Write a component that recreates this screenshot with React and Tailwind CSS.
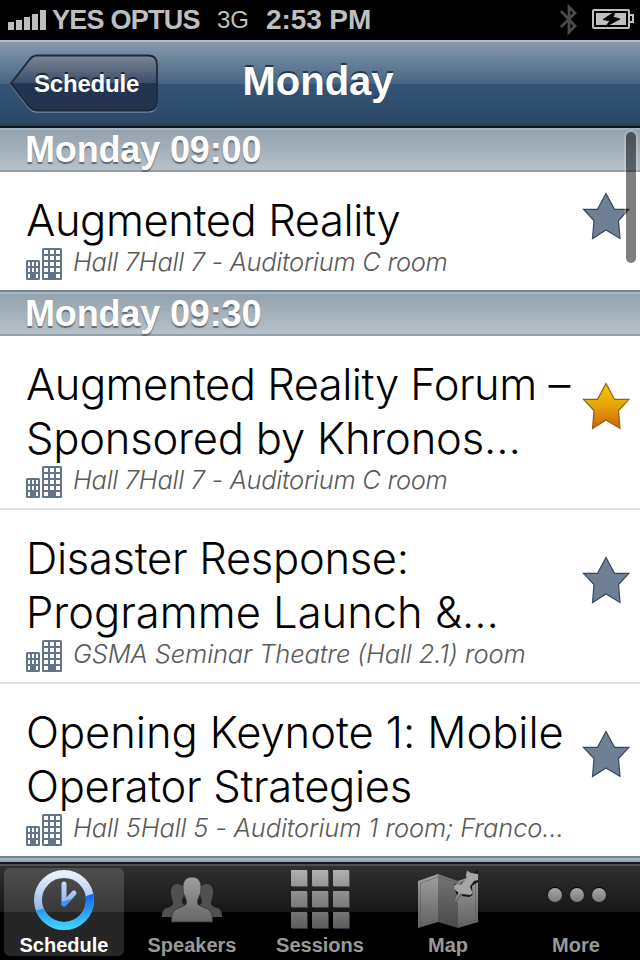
import React from "react";

const sans = "font-['Liberation_Sans',Arial,sans-serif]";

function Battery() {
  return (
    <svg width="43" height="22" viewBox="0 0 43 22" className="block">
      <rect x="1" y="1" width="36" height="18" rx="1" fill="none" stroke="#bfbfbf" strokeWidth="2" />
      <rect x="4" y="4" width="30" height="12" fill="#bfbfbf" />
      <path d="M38 6h3v7h-3" fill="none" stroke="#bfbfbf" strokeWidth="2" />
      <path d="M24 2L11 10.500l7 1.500-5 6 15-8-7-2z" fill="#000" stroke="#000" strokeWidth=".8" />
    </svg>
  );
}

function StatusBar() {
  return (
    <div className={`flex h-10 items-center bg-black text-[#bfbfbf] ${sans}`}>
      <div className="ml-2 flex h-5 w-[38px] items-end gap-[2px]">
        <i className="h-2 w-[6px] bg-current" />
        <i className="h-[10px] w-[6px] bg-current" />
        <i className="h-[13px] w-[6px] bg-current" />
        <i className="h-4 w-[6px] bg-current" />
        <i className="h-5 w-[6px] bg-current" />
      </div>
      <span className="ml-[6px] w-[165px] whitespace-nowrap text-[27px] font-bold tracking-[-0.75px]">YES OPTUS</span>
      <span className="w-[49px] text-[24px]">3G</span>
      <span className="whitespace-nowrap text-[28px] font-bold tracking-[-0.1px]">2:53 PM</span>
      <svg width="18" height="32" viewBox="0 0 18 32" className="mr-[14px] ml-auto">
        <path d="M1 7l14 15-6 6V3l6 6L1 23" fill="none" stroke="#4a4a4a" strokeWidth="2.8" />
      </svg>
      <div className="mr-[5px]"><Battery /></div>
    </div>
  );
}

function NavBar() {
  return (
    <div className={`grid h-[88px] grid-cols-[160px_1fr_164px] items-center border-t-2 border-b-2 border-t-[#b0bfcb] border-b-[#11161c] bg-[linear-gradient(#8798ae_0,#7488a0_15%,#476685_49.5%,#33557a_50%,#2d4864_96%,#263b52_100%)] text-white ${sans}`}>
      <div className="-mt-[1px] grid h-[60px] items-center pl-[10px]">
        <svg width="150" height="60" viewBox="0 0 150 60" className="col-start-1 row-start-1">
          <defs>
            <linearGradient id="back" x1="0" y1="0" x2="0" y2="1">
              <stop offset="0" stopColor="#7b8694" />
              <stop offset=".5" stopColor="#3b4f6b" />
              <stop offset=".51" stopColor="#213552" />
              <stop offset="1" stopColor="#243349" />
            </linearGradient>
          </defs>
          <path d="M27 3h111q9 0 9 9v37q0 9-9 9H27q-5 0-9-5L1 31 18 9q4-6 9-6z" fill="none" stroke="#7189a3" strokeWidth="1.5" />
          <path d="M27 1.500h111q9 0 9 9v37q0 9-9 9H27q-5 0-9-5L1 29.500 18 7.500q4-6 9-6z" fill="url(#back)" stroke="#1d2938" strokeWidth="1.8" />
        </svg>
        <span className="col-start-1 row-start-1 pl-6 text-[24px] leading-none font-bold tracking-[-0.2px] [text-shadow:0_-2px_0_#1b2838]">Schedule</span>
      </div>
      <h1 className="-mt-[7px] text-center text-[40px] leading-none font-bold [text-shadow:0_-2px_0_#26384d]">Monday</h1>
    </div>
  );
}

function SectionHeader({ children, first }) {
  return (
    <div className={first
      ? `h-11 border-t-2 border-b-2 border-t-[#a3b3bf] border-b-[#949fa8] bg-linear-to-b from-[#92a1ac] to-[#b7c1c9] pl-[25px] ${sans}`
      : `h-[46px] border-t-2 border-b-2 border-t-[#758690] border-b-[#949fa8] bg-linear-to-b from-[#92a1ac] to-[#b7c1c9] pl-[25px] shadow-[inset_0_2px_#a7b7c2] ${sans}`}>
      <h2 className={first
        ? "pt-0 text-[36px] leading-10 font-bold text-white tracking-[-0.15px] [text-shadow:0_2px_1px_#626b72]"
        : "pt-[2px] text-[36px] leading-10 font-bold text-white tracking-[-0.15px] [text-shadow:0_2px_1px_#626b72]"}>{children}</h2>
    </div>
  );
}

function Building() {
  const big = [0, 1, 2, 3, 4].flatMap((r) => [0, 1, 2].map((c) => [r, c])).filter(([r, c]) => !(r === 4 && c === 1));
  const small = [0, 1, 2].flatMap((r) => [0, 1, 2].map((c) => [r, c])).filter(([r, c]) => !(r === 2 && c === 1));
  return (
    <svg width="36" height="32" viewBox="0 0 36 32" className="shrink-0">
      <rect x="16" y="0" width="20" height="32" rx="1.500" fill="#62738a" />
      <rect x="0" y="12" width="14" height="20" rx="1.500" fill="#62738a" />
      {big.map(([r, c]) => <rect key={`b${r}${c}`} x={18 + c * 6} y={2 + r * 6} width="4" height="4" fill="#fff" />)}
      {small.map(([r, c]) => <rect key={`s${r}${c}`} x={2 + c * 4} y={14 + r * 6} width="2" height="4" fill="#fff" />)}
    </svg>
  );
}

function Star({ gold }) {
  return (
    <svg width="48" height="49" viewBox="0 0 48 49">
      <defs>
        <linearGradient id="gold" x1="0" y1="0" x2="0" y2="1">
          <stop offset="0" stopColor="#edcd00" />
          <stop offset=".5" stopColor="#e6a307" />
          <stop offset="1" stopColor="#c9640c" />
        </linearGradient>
      </defs>
      <path d="M24 1.500L32.500 17.300H47L36.500 28.500 38 46.500 24 38 10.500 46.500 12 28.500 1.500 17.300H15.500z" fill={gold ? "url(#gold)" : "#6f8094"} stroke={gold ? "#946018" : "#38485a"} strokeWidth="1.2" />
    </svg>
  );
}

function Row({ lines, sub, subClass, gold, last, single }) {
  return (
    <div className={single ? "flex h-[118px] bg-white" : last ? "flex h-[172px] bg-white" : "flex h-[174px] border-b-2 border-[#e0e0e0] bg-white"}>
      <div className="w-[582px] pt-[21px] pl-[26px] font-[Inter,sans-serif] font-light whitespace-nowrap">
        {lines.map(([text, cls]) => (
          <div key={text} className={`text-[43.500px] leading-[54px] text-black ${cls}`}>{text}</div>
        ))}
        <div className="flex h-[27px]">
          <div className="mt-[1px]"><Building /></div>
          <span className={`ml-[11px] pt-[1px] text-[25.500px] leading-[27px] text-[#5a5a5a] italic ${subClass}`}>{sub}</span>
        </div>
      </div>
      <div className={single ? "pt-5" : "pt-[46px]"}><Star gold={gold} /></div>
    </div>
  );
}

function ClockIcon() {
  return (
    <svg width="62" height="62" viewBox="0 0 62 62">
      <defs>
        <linearGradient id="ice" x1="0" y1="0" x2="0" y2="1">
          <stop offset="0" stopColor="#e6effc" />
          <stop offset="1" stopColor="#7099e0" />
        </linearGradient>
        <linearGradient id="aqua" gradientUnits="userSpaceOnUse" x1="0" y1="26" x2="0" y2="60">
          <stop offset="0" stopColor="#1766e8" />
          <stop offset="1" stopColor="#3fd8ff" />
        </linearGradient>
        <linearGradient id="hand" gradientUnits="userSpaceOnUse" x1="0" y1="12" x2="0" y2="36">
          <stop offset="0" stopColor="#c9daf6" />
          <stop offset="1" stopColor="#8fb2ee" />
        </linearGradient>
        <clipPath id="lower"><path d="M0 42Q30 36 62 24v38H0z" /></clipPath>
        <clipPath id="handLower"><path d="M20 33.500Q32 33 46 27v14H20z" /></clipPath>
      </defs>
      <circle cx="31" cy="31" r="26" fill="none" stroke="url(#ice)" strokeWidth="8" />
      <path d="M31 15v20l10-11" fill="none" stroke="url(#hand)" strokeWidth="5" strokeLinecap="round" strokeLinejoin="round" />
      <g clipPath="url(#lower)">
        <circle cx="31" cy="31" r="26" fill="none" stroke="url(#aqua)" strokeWidth="8" />
      </g>
      <path d="M31 15v20l10-11" clipPath="url(#handLower)" fill="none" stroke="#3a92f5" strokeWidth="5" strokeLinecap="round" strokeLinejoin="round" />
    </svg>
  );
}

function PeopleIcon() {
  const side = "M15.500 8c5 0 7 4 6.500 10-.5 4-2 5-2 8 0 2 2 3 6 5v10H0c0-6 1-7.500 5-9 4-1.500 6-2 6-5s-1.500-5-2-9C8.500 12 10.500 8 15.500 8z";
  return (
    <svg width="60" height="48" viewBox="0 0 60 48">
      <defs>
        <linearGradient id="man" x1="0" y1="0" x2="0" y2="1"><stop offset="0" stopColor="#a0a0a0" /><stop offset="1" stopColor="#666" /></linearGradient>
      </defs>
      <path d={side} fill="#505050" />
      <path d={side} fill="#505050" transform="translate(60 0) scale(-1 1)" />
      <path d="M30 1c7 0 9.300 5 9 12-.4 7-3.500 9-3.500 13 0 3 2.500 4 6.500 5.500 7 2.500 8.500 5 8.500 14.500H9.500c0-9.500 1.500-12 8.500-14.500 4-1.500 6.500-2.500 6.500-5.500 0-4-3.100-6-3.500-13C20.700 6 23 1 30 1z" fill="url(#man)" stroke="#333" strokeWidth=".8" />
    </svg>
  );
}

function GridIcon() {
  return (
    <div className="grid grid-cols-3 gap-x-[5px] gap-y-[5px]">
      {[0, 1, 2, 3, 4, 5, 6, 7, 8].map((i) => (
        <i key={i} className={i < 3
          ? "size-4 bg-linear-to-b from-[#b0b0b0] to-[#969696] shadow-[1px_1px_0_#555]"
          : i < 6 ? "size-4 bg-linear-to-b from-[#929292] to-[#7a7a7a] shadow-[1px_1px_0_#444]"
          : "size-4 bg-linear-to-b from-[#757575] to-[#5c5c5c] shadow-[1px_1px_0_#333]"} />
      ))}
    </div>
  );
}

function MapIcon() {
  return (
    <svg width="62" height="60" viewBox="0 0 62 60">
      <defs>
        <linearGradient id="fold" x1="0" y1="0" x2="0" y2="1"><stop offset="0" stopColor="#a0a0a0" /><stop offset="1" stopColor="#606060" /></linearGradient>
        <linearGradient id="foldDark" x1="0" y1="0" x2="0" y2="1"><stop offset="0" stopColor="#757575" /><stop offset="1" stopColor="#484848" /></linearGradient>
      </defs>
      <path d="M1 11L21 4v48L1 58z" fill="url(#fold)" />
      <path d="M21 4l20 7v47l-20-6z" fill="url(#foldDark)" />
      <path d="M41 11l20-7v48l-20 6z" fill="url(#fold)" />
      <path d="M3.500 13L21 7l20 6 17.500-6v43L41 55.500 21 49.500 3.500 55z" fill="none" stroke="#555" strokeOpacity=".5" />
      <path d="M61 0v12l-6 4 .5 9-3 2-8-1-3.500 2-3-8-1-6h6z" fill="#171717" />
      <path d="M50 .5l4 2.500 7 1v6l-4 1-4 5.500 2.500 6.500-2 2-8-1-5.500 8-2-1 3.500-8.500-4-3-.5-4 3-1.500 4 .5 5.500-6.500-.500-3z" fill="#a5a5a5" />
      <path d="M43.500 23l-5.500 8 2 1 5.500-8z" fill="#6a6a6a" />
    </svg>
  );
}

function Tab({ label, active, icon, iconClass }) {
  return (
    <div className={active ? "w-32 px-1" : "w-32 px-1 text-[#999]"}>
      <div className={active ? "flex h-[88px] flex-col items-center rounded-md bg-white/15 text-white" : "flex h-[88px] flex-col items-center"}>
        <div className={`flex h-[66px] shrink-0 justify-center ${iconClass}`}>{icon}</div>
        <span className="text-[20px] leading-[22px] font-bold">{label}</span>
      </div>
    </div>
  );
}

export default function App() {
  return (
    <div className="relative flex h-[960px] w-[640px] flex-col overflow-hidden bg-white">
      <StatusBar />
      <NavBar />
      <SectionHeader first>Monday 09:00</SectionHeader>
      <Row single lines={[["Augmented Reality", "tracking-[-0.4px]"]]} sub="Hall 7Hall 7 - Auditorium C room" subClass="tracking-[-0.3px]" />
      <SectionHeader>Monday 09:30</SectionHeader>
      <Row gold lines={[["Augmented Reality Forum –", "tracking-[-0.5px]"], ["Sponsored by Khronos…", "tracking-[-0.2px]"]]} sub="Hall 7Hall 7 - Auditorium C room" subClass="tracking-[-0.3px]" />
      <Row lines={[["Disaster Response:", "tracking-[-0.3px]"], ["Programme Launch &…", "tracking-[0px]"]]} sub="GSMA Seminar Theatre (Hall 2.1) room" subClass="tracking-[-0.13px]" />
      <Row last lines={[["Opening Keynote 1: Mobile", "tracking-[-0.05px]"], ["Operator Strategies", "tracking-[-0.33px]"]]} sub="Hall 5Hall 5 - Auditorium 1 room; Franco…" subClass="tracking-[-0.13px]" />
      <div className="h-[6px] shrink-0 border-t-2 border-[#758690] bg-linear-to-b from-[#a9b9c5] to-[#92a1b0]" />
      <div className={`flex h-[98px] shrink-0 border-t-2 border-[#15171c] bg-[linear-gradient(#505050_0,#505050_2px,#303030_2px,#171717_48px,#000_48px)] pt-1 ${sans}`}>
        <Tab active label="Schedule" icon={<ClockIcon />} iconClass="pt-[1px]" />
        <Tab label="Speakers" icon={<PeopleIcon />} iconClass="pt-2" />
        <Tab label="Sessions" icon={<GridIcon />} iconClass="pt-[2px] items-start" />
        <Tab label="Map" icon={<MapIcon />} iconClass="pt-[2px]" />
        <Tab label="More" iconClass="gap-2 pt-5 pl-[2px]" icon={<>
          <i className="size-[14px] rounded-full bg-linear-to-b from-[#a8a8a8] to-[#7b7b7b] shadow-[0_-1px_1px_#000]" />
          <i className="size-[14px] rounded-full bg-linear-to-b from-[#a8a8a8] to-[#7b7b7b] shadow-[0_-1px_1px_#000]" />
          <i className="size-[14px] rounded-full bg-linear-to-b from-[#a8a8a8] to-[#7b7b7b] shadow-[0_-1px_1px_#000]" />
        </>} />
      </div>
      <div className="absolute top-[132px] left-[626px] h-[131px] w-[10px] rounded-full bg-black/50 shadow-[0_0_0_2px_rgba(255,255,255,0.2)]" />
    </div>
  );
}
